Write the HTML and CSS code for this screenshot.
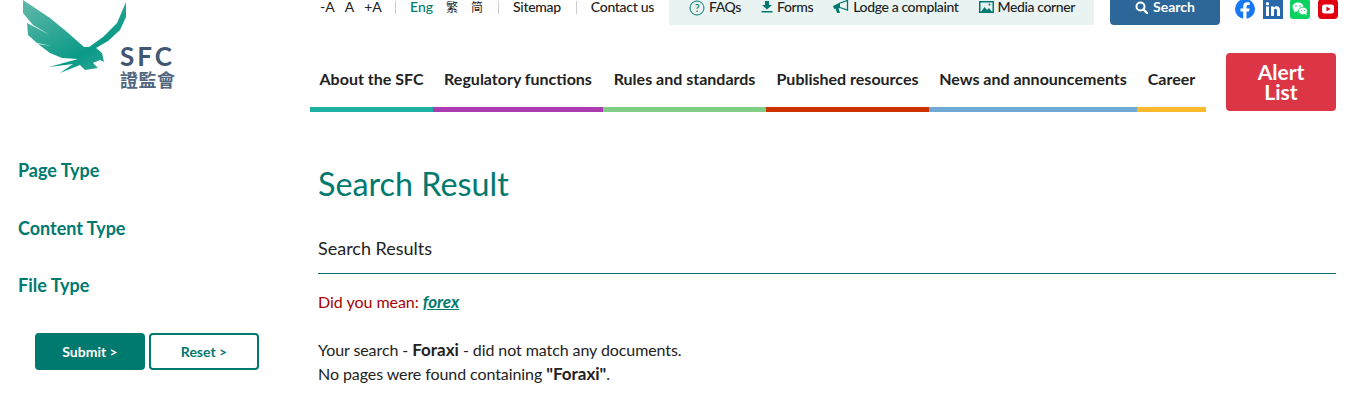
FILE: index.html
```html
<!DOCTYPE html>
<html lang="en">
<head>
<meta charset="utf-8">
<title>Search Result - SFC</title>
<link rel="stylesheet" href="styles.css">
</head>
<body>
<header class="header">
  <div class="logo">
    <svg class="eagle" viewBox="0 0 130 76" width="130" height="76" aria-hidden="true">
      <defs><linearGradient id="eg" x1="0" y1="0" x2="0.75" y2="1"><stop offset="0" stop-color="#62b9aa"/><stop offset=".75" stop-color="#0a9a87"/><stop offset="1" stop-color="#2ba594"/></linearGradient></defs>
      <path fill="url(#eg)" d="M23 0L50 18 67 32 84 47 89 47 103 37 117 23 126 2 126 17 120 30 108 41 96 48 102 53 104 62 100 60 93 63 98 68 85 70 80 65 60 73 73 64 49 67 78 59 62 58 50 53 38 44 52 46 37 43 28 35 27 23 50 35 33 25 23 13Z"/>
    </svg>
    <div class="logo-text">
      <div class="logo-sfc">SFC</div>
      <div class="logo-cjk">證監會</div>
    </div>
  </div>
  <div class="head-main">
    <div class="topbar">
      <div class="textsize"><span>-A</span><span>A</span><span>+A</span></div>
      <div class="sep"></div>
      <div class="langs"><span class="on">Eng</span><span class="cjk">繁</span><span class="cjk">简</span></div>
      <div class="sep"></div>
      <span class="toplink">Sitemap</span>
      <div class="sep"></div>
      <span class="toplink">Contact us</span>
      <div class="quick">
        <span class="qi"><svg width="16" height="16" viewBox="0 0 16 16"><circle cx="8" cy="8" r="7" fill="none" stroke="#00796f" stroke-width="1"/><text x="8" y="11.500" text-anchor="middle" class="qm">?</text></svg>FAQs</span>
        <span class="qi"><svg width="12" height="14" viewBox="0 0 12 14"><path fill="#00796f" d="M4 1h4v4h3L6 9.500 1 5h3zM0.500 11h11v1.500H0.500z"/></svg>Forms</span>
        <span class="qi"><svg width="16" height="14" viewBox="0 0 16 14"><path fill="#00796f" d="M0 6l7-3.500V8L5.500 8.500 7 13H4L2.500 8.500 1 9z"/><path fill="none" stroke="#00796f" stroke-width="1.300" d="M7 3l7.500-2.500v9.500L7 7.500"/></svg>Lodge a complaint</span>
        <span class="qi"><svg width="15" height="14" viewBox="0 0 15 14"><rect x=".75" y="1.750" width="13.500" height="10.500" fill="none" stroke="#00796f" stroke-width="1.500"/><path fill="#00796f" d="M2 12l3.500-5 2.500 3 2-2 3 4z"/><circle cx="10.500" cy="4.500" r="1" fill="#00796f"/></svg>Media corner</span>
      </div>
      <button class="searchbtn"><svg width="13" height="13" viewBox="0 0 13 13"><circle cx="5.500" cy="5.500" r="4" fill="none" stroke="#fff" stroke-width="2"/><path d="M8.500 8.500l3.500 3.500" stroke="#fff" stroke-width="2.400" stroke-linecap="round"/></svg>Search</button>
      <div class="social">
        <svg width="20" height="20" viewBox="0 0 20 20"><circle cx="10" cy="10" r="10" fill="#1877f2"/><path fill="#fff" d="M11.500 20v-7.500h2.600l.5-3h-3.100V7.700c0-.9.400-1.600 1.700-1.600h1.500V3.500s-1.300-.2-2.500-.2c-2.500 0-4 1.500-4 4.100v2.100H5.500v3h2.700V20z"/></svg>
        <svg width="20" height="20" viewBox="0 0 20 20"><rect width="20" height="20" fill="#2867a8"/><path fill="#fff" d="M3 7.500h3V17H3zM4.500 3a1.700 1.700 0 110 3.400 1.700 1.700 0 010-3.400zM8 7.500h2.800v1.300c.5-.9 1.500-1.500 2.900-1.500 2.600 0 3.300 1.700 3.300 4.200V17h-3v-5c0-1.200-.2-2.200-1.500-2.200S11 10.800 11 12v5H8z"/></svg>
        <svg width="20" height="20" viewBox="0 0 20 20"><rect width="20" height="20" rx="3" fill="#09d261"/><ellipse cx="8" cy="8" rx="5.500" ry="4.600" fill="#fff"/><path fill="#fff" d="M4.500 11l-.8 2.500 3-1.500z"/><ellipse cx="13" cy="12" rx="4.500" ry="3.800" fill="#fff" stroke="#09d261" stroke-width=".8"/><path fill="#fff" d="M15 15l1.500 1.500-.2-2.500z"/><circle cx="6" cy="7" r=".8" fill="#09d261"/><circle cx="10" cy="7" r=".8" fill="#09d261"/><circle cx="11.500" cy="11.500" r=".6" fill="#09d261"/><circle cx="14.500" cy="11.500" r=".6" fill="#09d261"/></svg>
        <svg width="20" height="20" viewBox="0 0 20 20"><rect width="20" height="20" rx="4" fill="#e0000f"/><rect x="4" y="5.500" width="12" height="9" rx="2.500" fill="#fff"/><path fill="#e0000f" d="M8.500 7.500l4 2.500-4 2.500z"/></svg>
      </div>
    </div>
    <div class="navrow">
      <nav class="nav">
        <a class="c1">About the SFC</a>
        <a class="c2">Regulatory functions</a>
        <a class="c3">Rules and standards</a>
        <a class="c4">Published resources</a>
        <a class="c5">News and announcements</a>
        <a class="c6">Career</a>
      </nav>
      <button class="alert">Alert<br>List</button>
    </div>
  </div>
</header>
<div class="page">
  <aside class="side">
    <h3>Page Type</h3>
    <h3>Content Type</h3>
    <h3>File Type</h3>
    <div class="actions">
      <button class="btn solid">Submit &gt;</button>
      <button class="btn outline">Reset &gt;</button>
    </div>
  </aside>
  <main class="content">
    <h1>Search Result</h1>
    <h2>Search Results</h2>
    <p class="didyou">Did you mean: <a>forex</a></p>
    <p class="msg">Your search - <b>Foraxi</b> - did not match any documents.<br>No pages were found containing <b>"Foraxi"</b>.</p>
  </main>
</div>
</body>
</html>
```
FILE: styles.css
```css
* { box-sizing: border-box; }
html, body { margin: 0; padding: 0; height: 406px; overflow: hidden; }
body { font-family: Lato, "Noto Sans CJK TC", sans-serif; color: #222; background: #fff; }
button { font-family: inherit; border: 0; cursor: pointer; }

.header { display: flex; height: 112px; }
.logo { width: 310px; flex: none; position: relative; }
.eagle { position: absolute; left: 0; top: 0; }
.logo-text { position: absolute; left: 120px; top: 44px; color: #3f5773; }
.logo-sfc { font-weight: 700; font-size: 26px; line-height: 25px; letter-spacing: 3px; }
.logo-cjk { font-family: "Noto Sans CJK TC", sans-serif; font-weight: 700; font-size: 18px; line-height: 20px; letter-spacing: .5px; color: #52677f; }

.head-main { flex: 1; min-width: 0; }
.topbar { display: flex; align-items: flex-start; height: 25px; font-size: 14px; line-height: 14px; color: #222; padding-left: 10px; }
.textsize { display: flex; gap: 10px; width: 62px; }
.sep { width: 1px; height: 13px; background: #ccc; margin: 1px 14px 0 15px; }
.textsize + .sep { margin-left: 13px; }
.langs { display: flex; gap: 13px; }
.langs .on { color: #00796f; font-weight: 500; }
.langs .cjk { font-family: "Noto Sans CJK TC", sans-serif; font-size: 12px; }
.toplink { font-weight: 500; white-space: nowrap; letter-spacing: -.3px; }
.quick { display: flex; gap: 20px; margin-left: 15px; height: 25px; width: 425px; padding-left: 20px; background: #e9f4f2; flex: none; letter-spacing: -.38px; }
.qi { display: flex; align-items: flex-start; gap: 4px; white-space: nowrap; font-weight: 500; }
.qi svg { flex: none; }
.qm { font-size: 11px; fill: #00796f; font-family: Lato, sans-serif; }
.searchbtn { display: flex; justify-content: center; gap: 5px; width: 110px; height: 25px; margin-left: 16px; padding: 0; background: #2d6698; color: #fff; font-size: 14px; line-height: 14px; font-weight: 700; border-radius: 0 0 4px 4px; }
.searchbtn svg { margin-top: 1px; }
.social { display: flex; gap: 7.67px; margin-left: 15px; height: 19px; overflow: hidden; }
.social svg { flex: none; margin-top: -1px; }

.navrow { display: flex; align-items: flex-start; margin-top: 28px; }
.nav { display: grid; grid-template-columns: 123px 170px 163px 163px 208px 69px; width: 896px; }
.nav a { display: block; height: 59px; padding-top: 16px; border-bottom: 5px solid; font-size: 16px; line-height: 20px; font-weight: 700; color: #222; white-space: nowrap; text-align: center; }
.c1 { border-color: #1fb0a4 !important; }
.c2 { border-color: #ab3bb1 !important; }
.c3 { border-color: #7fce85 !important; }
.c4 { border-color: #cc3300 !important; }
.c5 { border-color: #70aad4 !important; }
.c6 { border-color: #fbb92c !important; }
.alert { width: 110px; height: 58px; margin-left: 20px; padding: 0; background: #dc3545; color: #fff; font-size: 21px; line-height: 20px; font-weight: 700; border-radius: 4px; }

.page { display: flex; }
.side { width: 318px; flex: none; padding: 47px 0 0 18px; }
.side h3 { margin: 0 0 34.5px; font-size: 18px; line-height: 23px; font-weight: 700; color: #00796f; }
.actions { display: flex; gap: 4px; margin: 36px 0 0 17px; }
.btn { width: 110px; height: 37px; padding: 0; border-radius: 4px; font-size: 14px; font-weight: 700; }
.solid { background: #00796f; color: #fff; }
.outline { background: #fff; color: #00796f; border: 2px solid #00796f; }

.content { width: 1018px; flex: none; }
.content h1 { margin: 51px 0 0; font-size: 32.3px; line-height: 42px; font-weight: 400; color: #00796f; }
.content h2 { margin: 32px 0 0; height: 37px; font-size: 18px; line-height: 22px; font-weight: 400; color: #222; border-bottom: 1px solid #0a6e72; }
.didyou { margin: 16px 0 0; font-size: 16px; line-height: 24px; color: #a80000; letter-spacing: -.03px; }
.didyou a { color: #00796f; font-size: 17px; font-weight: 700; font-style: italic; text-decoration: underline; }
.msg { margin: 24px 0 0; font-size: 16px; line-height: 24px; color: #222; letter-spacing: -.08px; }
.msg b { font-size: 17px; letter-spacing: 0; }
```
